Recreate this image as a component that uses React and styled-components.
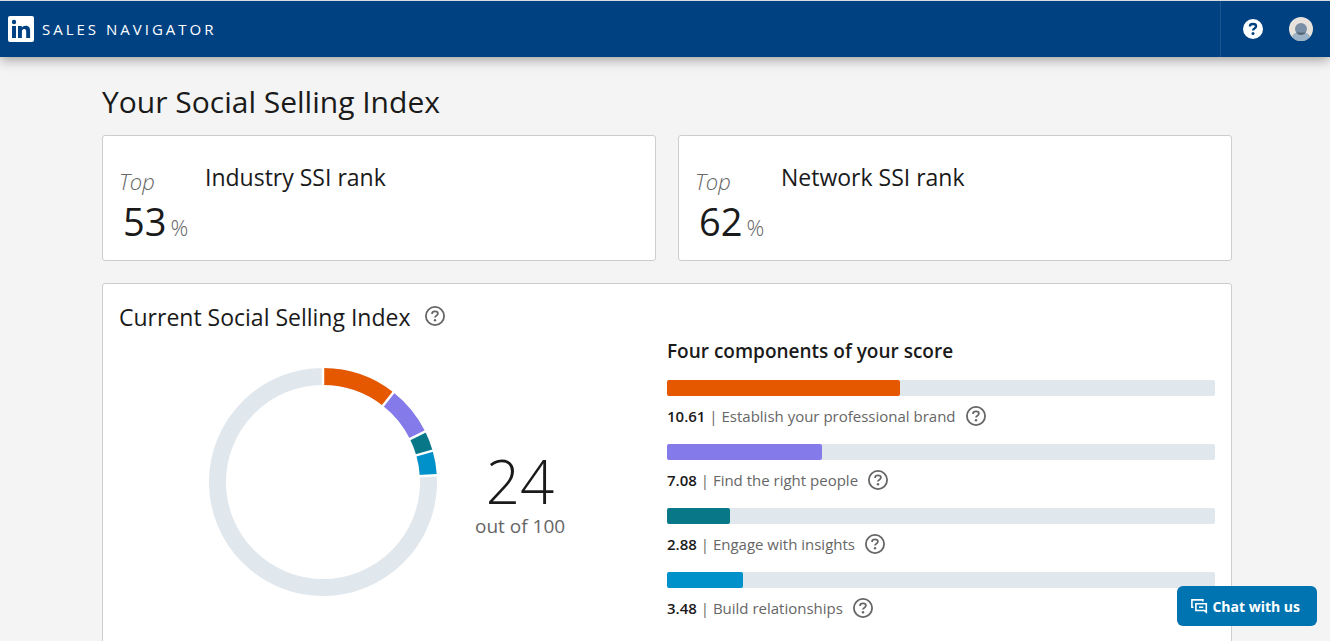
import React from "react";
import styled, { createGlobalStyle } from "styled-components";

const GlobalStyle = createGlobalStyle`
  * {
    box-sizing: border-box;
  }

  body {
    margin: 0;
    background: #f4f4f4;
    color: #1a1a1a;
    font-family: "Segoe UI", "Open Sans", "Noto Sans", sans-serif;
  }

  h1, h2, h3, p, ul {
    margin: 0;
    padding: 0;
    font-weight: 400;
  }

  button {
    border: 0;
    padding: 0;
    background: none;
    font-family: inherit;
    cursor: pointer;
  }

  svg {
    display: block;
  }
`;

const COMPONENTS = [
  { score: 10.61, label: "Establish your professional brand", color: "#e65800" },
  { score: 7.08, label: "Find the right people", color: "#847aea" },
  { score: 2.88, label: "Engage with insights", color: "#087889" },
  { score: 3.48, label: "Build relationships", color: "#0091ca" }
];

const MAX_COMPONENT = 25;

const Header = styled.header`
  display: flex;
  justify-content: space-between;
  height: 57px;
  border-top: 1px solid #d5dbe0;
  background: #004182;
  box-shadow: 0 2px 12px rgba(0, 0, 0, 0.4);
`;

const Brand = styled.a`
  display: flex;
  align-items: center;
  gap: 8px;
  padding-left: 8px;
  color: #fff;
  font-size: 15px;
  letter-spacing: 3px;
  text-decoration: none;
`;

const HeaderActions = styled.div`
  display: flex;
  align-items: center;
  gap: 24px;
  padding: 0 17px 0 20px;
  border-left: 1px solid #1d5590;
`;

const Main = styled.main`
  padding: 24px 98px 0 102px;
`;

const PageTitle = styled.h1`
  font-size: 30px;
  line-height: 42px;
`;

const Ranks = styled.div`
  display: grid;
  grid-template-columns: 1fr 1fr;
  gap: 22px;
  margin: 12px 0 22px;
`;

const Card = styled.section`
  border: 1px solid #cdcdcd;
  border-radius: 3px;
  background: #fff;
`;

const RankCard = styled(Card)`
  display: flex;
  height: 126px;
  padding: 24px 16px;
`;

const RankValue = styled.div`
  width: 86px;
`;

const RankTop = styled.p`
  padding-top: 5px;
  color: #666;
  font-size: 22px;
  font-style: italic;
  font-weight: 300;
  line-height: 32px;
`;

const RankNumber = styled.p`
  display: flex;
  align-items: baseline;
  gap: 4px;
  padding-left: 4px;
  font-size: 38px;
  line-height: 48px;
`;

const Percent = styled.span`
  color: #666;
  font-size: 22px;
  font-weight: 300;
`;

const SectionTitle = styled.h2`
  font-size: 23px;
  line-height: 34px;
`;

const IndexCard = styled(Card)`
  padding: 16px 16px 24px;
`;

const IndexHeader = styled.div`
  display: flex;
  align-items: flex-start;
  gap: 12px;
  height: 32px;

  button {
    margin-top: 4px;
  }
`;

const IndexBody = styled.div`
  display: grid;
  grid-template-columns: 1fr 1fr;
`;

const ScoreArea = styled.div`
  display: flex;
  align-items: center;
  gap: 38px;
  height: 268px;
  padding: 32px 0 0 90px;
`;

const Total = styled.div`
  padding-top: 22px;
  text-align: center;
`;

const TotalNumber = styled.p`
  font-size: 60px;
  font-weight: 300;
  line-height: 66px;
`;

const TotalCaption = styled.p`
  color: #666;
  font-size: 19px;
  line-height: 24px;
`;

const ComponentsTitle = styled.h3`
  padding-top: 4px;
  font-size: 19px;
  font-weight: 600;
  line-height: 30px;
`;

const ComponentList = styled.ul`
  padding-top: 14px;
  list-style: none;
`;

const ComponentItem = styled.li`
  height: 64px;
`;

const Track = styled.div`
  height: 16px;
  border-radius: 2px;
  background: #e0e7ed;
`;

const Fill = styled.div`
  height: 100%;
  border-radius: 2px;
  background: ${props => props.$color};
`;

const ComponentLabel = styled.div`
  display: flex;
  align-items: center;
  gap: 8px;
  padding-top: 8px;
  color: #666;
  font-size: 15px;
  line-height: 24px;

  strong {
    color: #1a1a1a;
    font-weight: 600;
  }
`;

const ChatButton = styled.button`
  position: fixed;
  right: 13px;
  bottom: 15px;
  display: flex;
  align-items: center;
  gap: 4px;
  height: 40px;
  padding: 0 17px 0 14px;
  border-radius: 6px;
  background: #0073b1;
  color: #fff;
  font-size: 14px;
  font-weight: 700;
`;

const HelpIcon = () => (
  <svg width="24" height="24" viewBox="0 0 24 24" fill="none" stroke="#666">
    <circle cx="12" cy="12" r="9.1" strokeWidth="1.8" />
    <path
      d="M9.1 9.9v-.3c0-1.4 1.1-2.2 2.9-2.2 1.7 0 2.9.8 2.9 2.2 0 1-.6 1.6-1.5 2.1-.9.5-1.4.9-1.4 1.9"
      strokeWidth="1.8"
    />
    <circle cx="12" cy="16.3" r="1.2" fill="#666" stroke="none" />
  </svg>
);

const HelpButton = ({ label }) => (
  <button type="button" aria-label={label}>
    <HelpIcon />
  </button>
);

const HeaderHelpIcon = () => (
  <svg width="24" height="24" viewBox="0 0 24 24" fill="none">
    <circle cx="12" cy="12" r="10" fill="#fff" />
    <path
      d="M8.9 9.6v-.3c0-1.5 1.200-2.300 3.100-2.300s3.100.8 3.100 2.300c0 1-.6 1.600-1.600 2.100-.9.500-1.400.9-1.400 1.900v.3"
      stroke="#004182"
      strokeWidth="2.3"
    />
    <circle cx="12" cy="16.5" r="1.5" fill="#004182" />
  </svg>
);

const Avatar = () => (
  <svg width="24" height="24" viewBox="0 0 24 24">
    <defs>
      <clipPath id="avatar-clip">
        <circle cx="12" cy="12" r="12" />
      </clipPath>
    </defs>
    <g clipPath="url(#avatar-clip)">
      <rect width="24" height="24" fill="#e7e2dc" />
      <path d="M3 24v-3c0-3 2-5 5-5h8c3 0 5 2 5 5v3z" fill="#9db3c8" />
      <circle cx="12" cy="12" r="6" fill="#788fa5" />
      <path d="M7.200 15.600h9.600c-1.100 1.500-2.800 2.400-4.800 2.400s-3.700-.9-4.800-2.400z" fill="#56687a" />
    </g>
  </svg>
);

const Logo = () => (
  <svg width="26" height="26" viewBox="0 0 26 26">
    <rect width="26" height="26" rx="2" fill="#fff" />
    <g fill="#004182">
      <circle cx="6" cy="6" r="2.2" />
      <rect x="4" y="10" width="4" height="12" />
      <path d="M10 10h3.800v1.700c.6-1.100 1.900-2 3.900-2 3.600 0 4.400 2.300 4.400 5.500V22h-3.900v-6c0-1.500-.2-3-2-3-1.900 0-2.300 1.400-2.300 2.900V22H10z" />
    </g>
  </svg>
);

const ChatIcon = () => (
  <svg width="17" height="16" viewBox="0 0 17 16" fill="none" stroke="#fff" strokeWidth="1.6">
    <path d="M2.500 9.200H.9V1.900h11v1.600" />
    <path d="M4.900 5.700h10.400v8.300l-1.900-1.500H4.900z" />
    <path d="M8 9.200h4.200" />
  </svg>
);

const DONUT_RADIUS = 105.5;

const pointAt = (share, radius) => {
  const angle = share * 2 * Math.PI;
  return [114 + radius * Math.sin(angle), 114 - radius * Math.cos(angle)];
};

const Donut = () => {
  const stops = [0];
  COMPONENTS.forEach(({ score }) => {
    stops.push(stops[stops.length - 1] + score / 100);
  });

  return (
    <svg width="228" height="228" viewBox="0 0 228 228" fill="none">
      <circle cx="114" cy="114" r={DONUT_RADIUS} stroke="#e0e7ed" strokeWidth="17" />
      {COMPONENTS.map(({ label, color }, i) => {
        const [x1, y1] = pointAt(stops[i], DONUT_RADIUS);
        const [x2, y2] = pointAt(stops[i + 1], DONUT_RADIUS);
        return (
          <path
            key={label}
            d={`M${x1} ${y1}A${DONUT_RADIUS} ${DONUT_RADIUS} 0 0 1 ${x2} ${y2}`}
            stroke={color}
            strokeWidth="17"
          />
        );
      })}
      {stops.map(stop => {
        const [x1, y1] = pointAt(stop, 95);
        const [x2, y2] = pointAt(stop, 116);
        return <line key={stop} x1={x1} y1={y1} x2={x2} y2={y2} stroke="#fff" strokeWidth="2.5" />;
      })}
    </svg>
  );
};

const Rank = ({ title, value }) => (
  <RankCard>
    <RankValue>
      <RankTop>Top</RankTop>
      <RankNumber>
        {value}
        <Percent>%</Percent>
      </RankNumber>
    </RankValue>
    <SectionTitle>{title}</SectionTitle>
  </RankCard>
);

const App = () => (
  <>
    <GlobalStyle />
    <Header>
      <Brand href="#">
        <Logo />
        SALES NAVIGATOR
      </Brand>
      <HeaderActions>
        <button type="button" aria-label="Help">
          <HeaderHelpIcon />
        </button>
        <button type="button" aria-label="Profile">
          <Avatar />
        </button>
      </HeaderActions>
    </Header>
    <Main>
      <PageTitle>Your Social Selling Index</PageTitle>
      <Ranks>
        <Rank title="Industry SSI rank" value={53} />
        <Rank title="Network SSI rank" value={62} />
      </Ranks>
      <IndexCard>
        <IndexHeader>
          <SectionTitle>Current Social Selling Index</SectionTitle>
          <HelpButton label="About the index" />
        </IndexHeader>
        <IndexBody>
          <ScoreArea>
            <Donut />
            <Total>
              <TotalNumber>24</TotalNumber>
              <TotalCaption>out of 100</TotalCaption>
            </Total>
          </ScoreArea>
          <div>
            <ComponentsTitle>Four components of your score</ComponentsTitle>
            <ComponentList>
              {COMPONENTS.map(({ score, label, color }) => (
                <ComponentItem key={label}>
                  <Track>
                    <Fill $color={color} style={{ width: `${(score / MAX_COMPONENT) * 100}%` }} />
                  </Track>
                  <ComponentLabel>
                    <span>
                      <strong>{score}</strong> | {label}
                    </span>
                    <HelpButton label={`About: ${label}`} />
                  </ComponentLabel>
                </ComponentItem>
              ))}
            </ComponentList>
          </div>
        </IndexBody>
      </IndexCard>
    </Main>
    <ChatButton type="button">
      <ChatIcon />
      Chat with us
    </ChatButton>
  </>
);

export default App;
